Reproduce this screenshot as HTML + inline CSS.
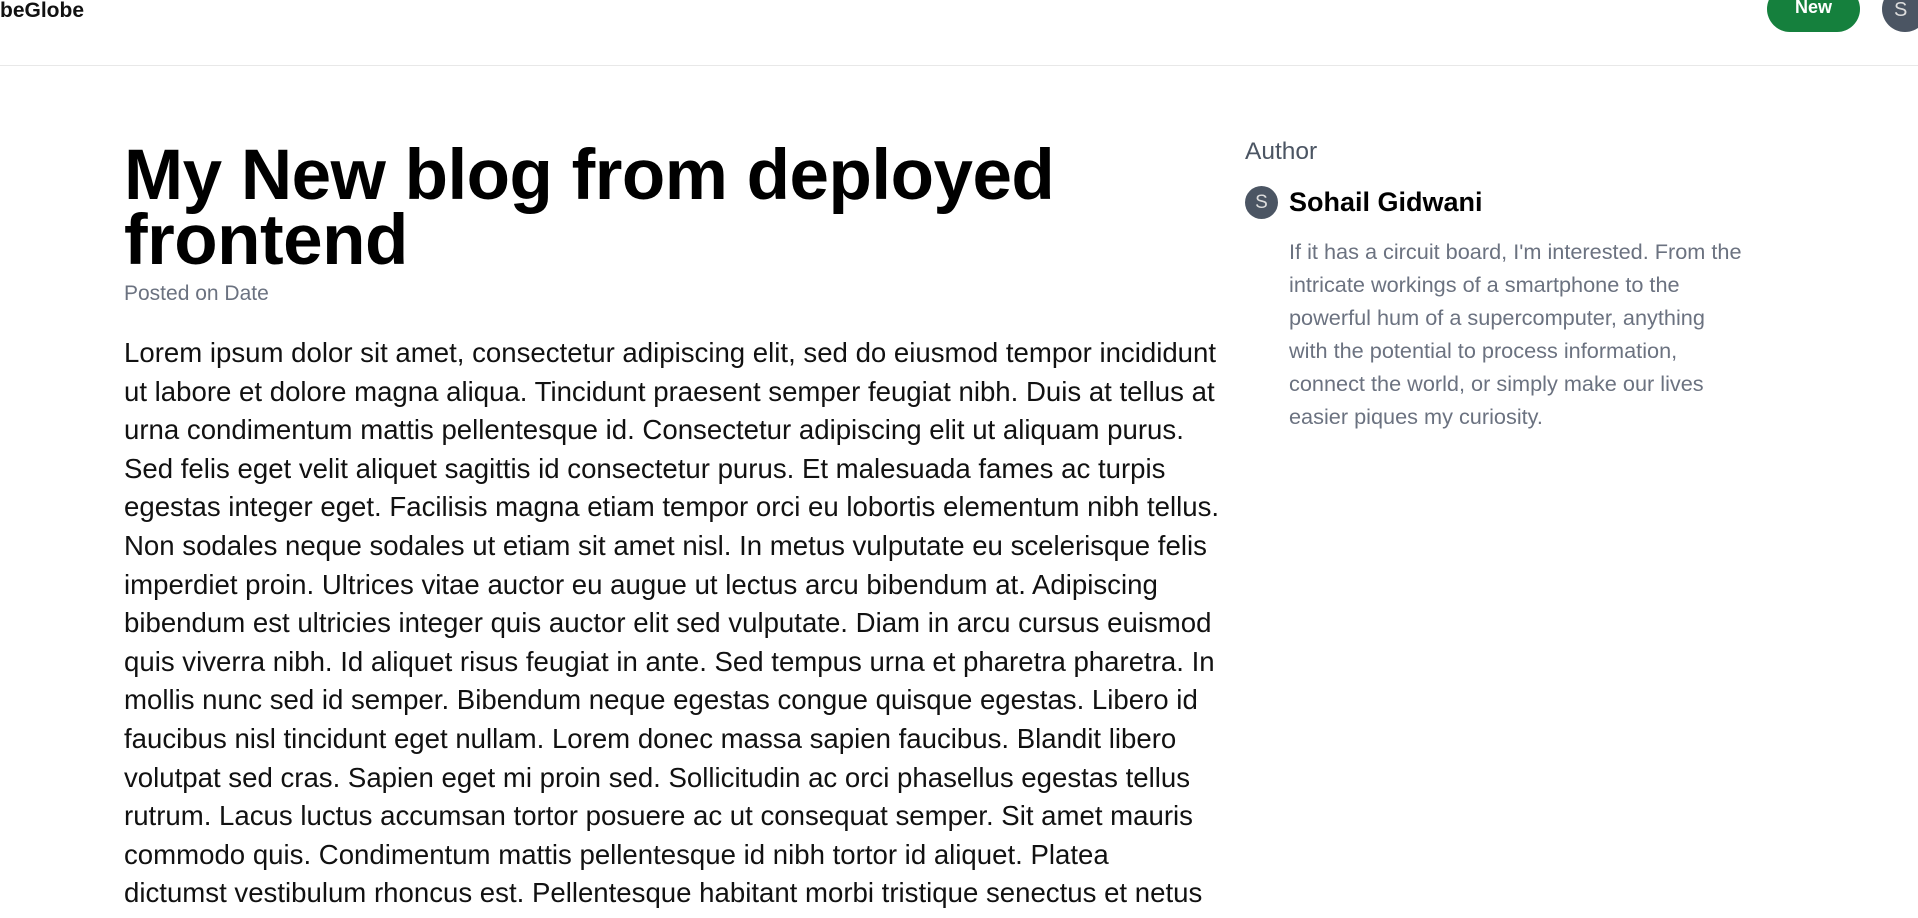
<!DOCTYPE html>
<html><head><meta charset="utf-8"><style>
*{margin:0;padding:0;box-sizing:border-box}
body{width:1918px;height:918px;overflow:hidden;background:#fff;font-family:"Liberation Sans",sans-serif;position:relative;color:#111}
.hdr{position:absolute;left:0;top:0;width:1918px;height:66px;border-bottom:1px solid #e8e8e8}
.logo{position:absolute;left:0;top:0;font-weight:bold;font-size:21px;line-height:22px}
.new{position:absolute;left:1767px;top:-14px;width:93px;height:46px;border-radius:23px;background:#15803d;color:#fff;font-weight:bold;font-size:18px;text-align:center;line-height:30px;padding-top:6px}
.av{position:absolute;left:1882px;top:-14px;width:46px;height:46px;border-radius:50%;background:#4b5563;color:#ddd;font-size:20px;line-height:36px;padding-top:6px;padding-left:12px}
h1{position:absolute;left:124px;top:143px;font-size:71px;line-height:65px;font-weight:bold;color:#000;letter-spacing:-0.5px}
.date{position:absolute;left:124px;top:282px;font-size:21px;color:#6b7280}
.body{position:absolute;left:124px;top:334px;font-size:27.6px;line-height:38.6px;white-space:nowrap;color:#111}
.auth{position:absolute;left:1245px;top:138px;font-size:24.5px;color:#4b5563}
.sav{position:absolute;left:1245px;top:186px;width:33px;height:33px;border-radius:50%;background:#4b5563;color:#ddd;font-size:19px;text-align:center;line-height:33px}
.name{position:absolute;left:1289px;top:187px;font-size:27px;font-weight:bold;color:#000}
.bio{position:absolute;left:1289px;top:235px;font-size:21.7px;line-height:33px;color:#6b7280;white-space:nowrap}
</style></head><body>
<div class="hdr"><div class="logo">beGlobe</div><div class="new">New</div><div class="av">S</div></div>
<h1>My New blog from deployed<br>frontend</h1>
<div class="date">Posted on Date</div>
<div class="body">Lorem ipsum dolor sit amet, consectetur adipiscing elit, sed do eiusmod tempor incididunt<br>ut labore et dolore magna aliqua. Tincidunt praesent semper feugiat nibh. Duis at tellus at<br>urna condimentum mattis pellentesque id. Consectetur adipiscing elit ut aliquam purus.<br>Sed felis eget velit aliquet sagittis id consectetur purus. Et malesuada fames ac turpis<br>egestas integer eget. Facilisis magna etiam tempor orci eu lobortis elementum nibh tellus.<br>Non sodales neque sodales ut etiam sit amet nisl. In metus vulputate eu scelerisque felis<br>imperdiet proin. Ultrices vitae auctor eu augue ut lectus arcu bibendum at. Adipiscing<br>bibendum est ultricies integer quis auctor elit sed vulputate. Diam in arcu cursus euismod<br>quis viverra nibh. Id aliquet risus feugiat in ante. Sed tempus urna et pharetra pharetra. In<br>mollis nunc sed id semper. Bibendum neque egestas congue quisque egestas. Libero id<br>faucibus nisl tincidunt eget nullam. Lorem donec massa sapien faucibus. Blandit libero<br>volutpat sed cras. Sapien eget mi proin sed. Sollicitudin ac orci phasellus egestas tellus<br>rutrum. Lacus luctus accumsan tortor posuere ac ut consequat semper. Sit amet mauris<br>commodo quis. Condimentum mattis pellentesque id nibh tortor id aliquet. Platea<br>dictumst vestibulum rhoncus est. Pellentesque habitant morbi tristique senectus et netus</div>
<div class="auth">Author</div>
<div class="sav">S</div>
<div class="name">Sohail Gidwani</div>
<div class="bio">If it has a circuit board, I'm interested. From the<br>intricate workings of a smartphone to the<br>powerful hum of a supercomputer, anything<br>with the potential to process information,<br>connect the world, or simply make our lives<br>easier piques my curiosity.</div>
</body></html>
